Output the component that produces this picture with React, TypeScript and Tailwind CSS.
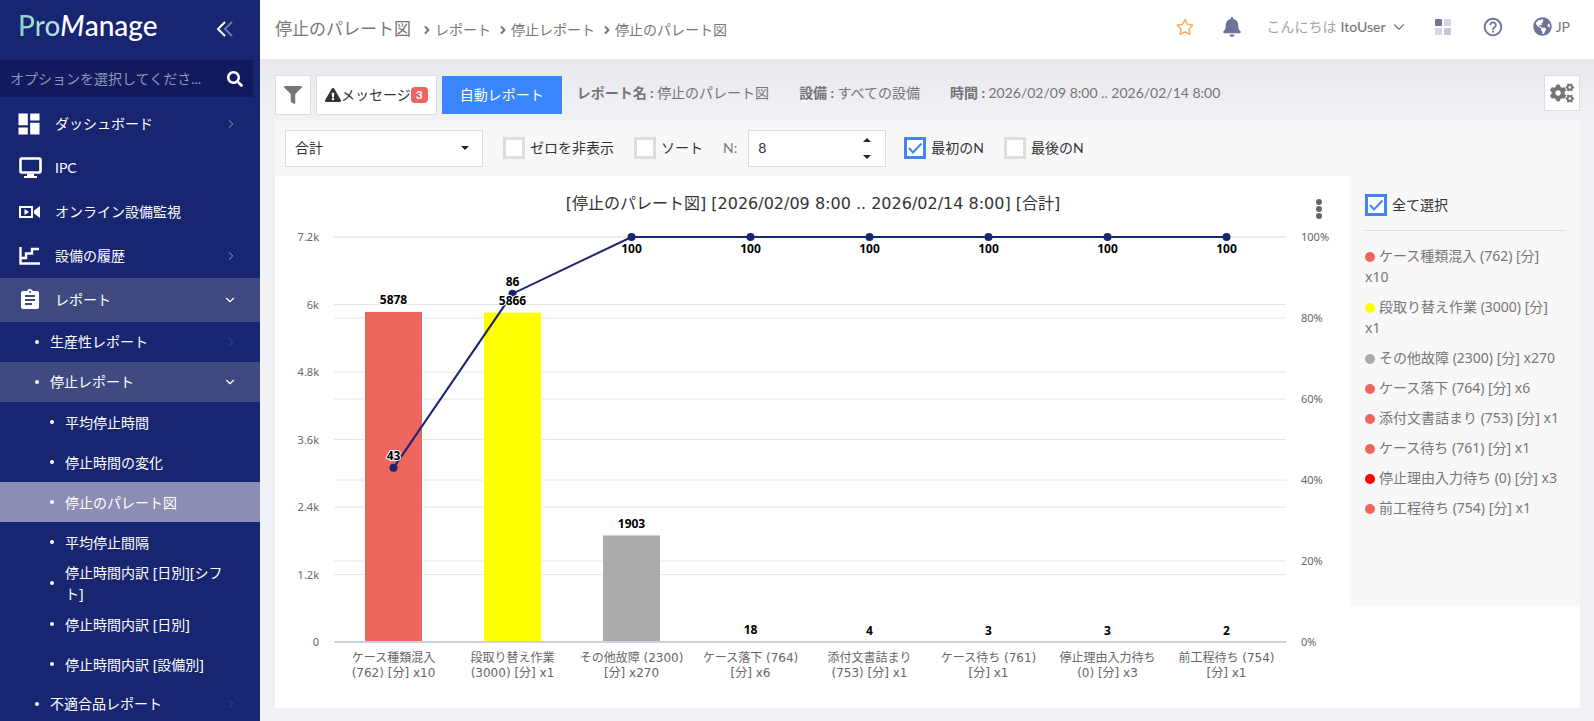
import { useState } from "react";
import { MdDashboard, MdAssignment, MdHelpOutline } from "react-icons/md";
import {
  FaBell,
  FaCogs,
  FaExclamationTriangle,
  FaFilter,
  FaGlobeAmericas,
  FaRegStar,
  FaSearch,
} from "react-icons/fa";
import { ChevronDown, ChevronRight } from "lucide-react";

const PARETO = [
  { label: ["ケース種類混入", "(762) [分] x10"], value: 5878, percent: 43, color: "#ec655f" },
  { label: ["段取り替え作業", "(3000) [分] x1"], value: 5866, percent: 86, color: "#ffff00" },
  { label: ["その他故障 (2300)", "[分] x270"], value: 1903, percent: 100, color: "#ababab" },
  { label: ["ケース落下 (764)", "[分] x6"], value: 18, percent: 100, color: "#ec655f" },
  { label: ["添付文書詰まり", "(753) [分] x1"], value: 4, percent: 100, color: "#ec655f" },
  { label: ["ケース待ち (761)", "[分] x1"], value: 3, percent: 100, color: "#ec655f" },
  { label: ["停止理由入力待ち", "(0) [分] x3"], value: 3, percent: 100, color: "#ff0000" },
  { label: ["前工程待ち (754)", "[分] x1"], value: 2, percent: 100, color: "#ec655f" },
];

const LEGEND = [
  { name: "ケース種類混入 (762) [分]\nx10", color: "#ec655f" },
  { name: "段取り替え作業 (3000) [分]\nx1", color: "#ffff00" },
  { name: "その他故障 (2300) [分] x270", color: "#ababab" },
  { name: "ケース落下 (764) [分] x6", color: "#ec655f" },
  { name: "添付文書詰まり (753) [分] x1", color: "#ec655f" },
  { name: "ケース待ち (761) [分] x1", color: "#ec655f" },
  { name: "停止理由入力待ち (0) [分] x3", color: "#ff0000" },
  { name: "前工程待ち (754) [分] x1", color: "#ec655f" },
];

const REPORTS = [
  "平均停止時間",
  "停止時間の変化",
  "停止のパレート図",
  "平均停止間隔",
  "停止時間内訳 [日別][シフト]",
  "停止時間内訳 [日別]",
  "停止時間内訳 [設備別]",
];

function MonitorIcon() {
  return (
    <svg viewBox="0 0 24 22" className="w-6 h-[22px]" fill="none" stroke="currentColor">
      <rect x="1.5" y="1.5" width="20" height="14" rx="1" strokeWidth="2.6" />
      <path d="M8 17h7v2h3v2H5v-2h3z" fill="currentColor" stroke="none" />
    </svg>
  );
}

function VideoIcon() {
  return (
    <svg viewBox="0 0 22 14" className="w-[22px] h-3.5" fill="none" stroke="currentColor">
      <rect x="1" y="2" width="12" height="10" strokeWidth="2" />
      <path d="M5.5 4v6l4.500-3z" fill="currentColor" stroke="none" />
      <path d="M21 1v12l-6-4.500v-3z" fill="currentColor" stroke="none" />
    </svg>
  );
}

function HistoryIcon() {
  return (
    <svg viewBox="0 0 22 18" className="w-[22px] h-[18px]" fill="none" stroke="currentColor" strokeWidth="2.4">
      <path d="M1.500 0v16.500H21" />
      <path d="M2 11h5V6.500h6V2h7" />
    </svg>
  );
}

function Chevron({ open, faint }: { open?: boolean; faint?: boolean }) {
  if (open) return <ChevronDown className="w-3.5 h-3.5 mr-[23px] text-white" />;
  return (
    <ChevronRight
      strokeWidth={1.5}
      className={faint ? "w-3.5 h-3.5 mr-[22px] text-white/20" : "w-3.5 h-3.5 mr-[22px] text-white/60"}
    />
  );
}

function MenuItem({ icon, text, arrow, open }: { icon: React.ReactNode; text: string; arrow?: boolean; open?: boolean }) {
  return (
    <a href="#" className={`flex items-center h-11 pl-[19px] ${open ? "bg-[#3f4b80]" : ""}`}>
      <span className="w-9 flex items-center">{icon}</span>
      <span className="flex-1">{text}</span>
      {arrow && <Chevron open={open} />}
    </a>
  );
}

function SubItem({ text, open }: { text: string; open?: boolean }) {
  return (
    <a href="#" className={`flex items-center h-10 shrink-0 pl-[35px] ${open ? "bg-[#3f4b80]" : ""}`}>
      <span className="w-1 h-1 rounded-full bg-white mr-[11px]" />
      <span className="flex-1">{text}</span>
      <Chevron open={open} faint />
    </a>
  );
}

function Sidebar() {
  return (
    <aside className="w-[260px] h-screen shrink-0 flex flex-col overflow-hidden bg-[#182570] text-white text-sm">
      <div className="flex items-center justify-between h-[60px] shrink-0 pl-[18px] pr-[26px] pb-2.5">
        <span className="text-[28px] leading-8 font-medium">
          <span className="bg-linear-to-r from-[#86d3c8] to-[#b9e4e6] bg-clip-text text-transparent">Pro</span>
          <i>M</i>anage
        </span>
        <button aria-label="メニューを閉じる" className="mt-2">
          <svg viewBox="0 0 18 16" className="w-[18px] h-4" fill="none" strokeWidth="2">
            <path d="M9 1 2 8l7 7" stroke="#ffffff" />
            <path d="m16 1-7 7 7 7" stroke="#7078ac" />
          </svg>
        </button>
      </div>
      <label className="flex items-center h-[37px] shrink-0 mr-[7px] pl-2.5 pr-2.5 bg-[#121a5e]">
        <input
          type="text"
          placeholder="オプションを選択してくださ..."
          className="flex-1 min-w-0 bg-transparent outline-none placeholder:text-[#9095b3]"
        />
        <FaSearch className="w-4 h-4" />
      </label>
      <nav className="flex flex-col pt-[5px]">
        <MenuItem icon={<MdDashboard className="w-7 h-7 -ml-1" />} text="ダッシュボード" arrow />
        <MenuItem icon={<MonitorIcon />} text="IPC" />
        <MenuItem icon={<VideoIcon />} text="オンライン設備監視" />
        <MenuItem icon={<HistoryIcon />} text="設備の履歴" arrow />
        <MenuItem icon={<MdAssignment className="w-6 h-6 -ml-px" />} text="レポート" arrow open />
        <SubItem text="生産性レポート" />
        <SubItem text="停止レポート" open />
        {REPORTS.map((name) => (
          <a
            key={name}
            href="#"
            className={`flex items-center min-h-10 shrink-0 pl-[50px] pr-7 ${name === "停止のパレート図" ? "bg-[#8c8db4]" : ""}`}
          >
            <span className="w-1 h-1 shrink-0 rounded-full bg-white mr-[11px]" />
            <span className="leading-[21px] font-['Noto_Sans','Noto_Sans_CJK_JP',sans-serif]">{name}</span>
          </a>
        ))}
        <SubItem text="不適合品レポート" />
      </nav>
    </aside>
  );
}

function Crumb({ text }: { text: string }) {
  return (
    <a href="#" className="flex items-center gap-0.5">
      <ChevronRight className="w-3 h-3" strokeWidth={4} />
      {text}
    </a>
  );
}

function Header() {
  return (
    <header className="flex items-center h-[59px] px-[15px] bg-white text-sm text-[#777777]">
      <h1 className="text-[17px] mr-2.5">停止のパレート図</h1>
      <nav className="flex items-center gap-1.5">
        <Crumb text="レポート" />
        <Crumb text="停止レポート" />
        <Crumb text="停止のパレート図" />
      </nav>
      <div className="ml-auto flex items-center pr-[9px] pb-1.5">
        <button aria-label="お気に入り" className="mr-[29px]">
          <FaRegStar className="w-[18px] h-[18px] text-[#f5b252]" />
        </button>
        <button aria-label="通知" className="mr-[26px]">
          <FaBell className="w-[18px] h-5 text-[#6f7299]" />
        </button>
        <button className="flex items-center mr-[27px]">
          <span className="text-[#a5a5a5] mr-1">こんにちは</span>
          <span className="font-medium">ItoUser</span>
          <ChevronDown className="w-[18px] h-[18px] ml-1" strokeWidth={1.5} />
        </button>
        <button aria-label="アプリ" className="grid grid-cols-2 gap-0.5 mr-[31px]">
          <span className="w-[7px] h-[7px] rounded-[1px] bg-[#6f7299]" />
          <span className="w-[7px] h-[7px] rounded-[1px] bg-[#d5d5e4]" />
          <span className="w-[7px] h-[7px] rounded-[1px] bg-[#d5d5e4]" />
          <span className="w-[7px] h-[7px] rounded-[1px] bg-[#c5c6d8]" />
        </button>
        <button aria-label="ヘルプ" className="mr-[29px]">
          <MdHelpOutline className="w-[22px] h-[22px] text-[#6f7299]" />
        </button>
        <button className="flex items-center gap-1">
          <FaGlobeAmericas className="w-[19px] h-[19px] text-[#6f7299]" />
          JP
        </button>
      </div>
    </header>
  );
}

function CheckBox({ label, initial = false }: { label: string; initial?: boolean }) {
  const [checked, setChecked] = useState(initial);
  return (
    <label className="flex items-center gap-[5px] text-[#333333]">
      <span className="relative flex">
        <input
          type="checkbox"
          checked={checked}
          onChange={(e) => setChecked(e.target.checked)}
          className="appearance-none w-[22px] h-[22px] border-3 border-[#dddddd] bg-white checked:border-[#4285f4]"
        />
        {checked && (
          <svg viewBox="0 0 22 22" className="absolute inset-0 pointer-events-none" fill="none" stroke="#4285f4" strokeWidth="2">
            <path d="m5 11 4 4.500 8.500-9" />
          </svg>
        )}
      </span>
      {label}
    </label>
  );
}

function ActionBar() {
  return (
    <div className="flex items-start h-[61px] pt-4 text-sm text-[#757575]">
      <button aria-label="フィルター" className="flex items-center justify-center w-9 h-10 mr-[5px] bg-white border border-[#dddee3]">
        <FaFilter className="w-[18px] h-[18px]" />
      </button>
      <button className="flex items-center h-10 mr-[5px] px-2 bg-white border border-[#dddee3] text-[#333333]">
        <FaExclamationTriangle className="w-4 h-4" />
        メッセージ
        <span className="px-[5px] h-4 rounded-sm bg-[#ec655f] text-white text-xs leading-4 font-bold">3</span>
      </button>
      <button className="h-[38px] mt-px w-[120px] bg-[#3a86ff] text-white">自動レポート</button>
      <div className="flex gap-[30px] ml-[15px] h-9 items-center">
        <span><b>レポート名 : </b>停止のパレート図</span>
        <span><b>設備 : </b>すべての設備</span>
        <span><b>時間 : </b>2026/02/09 8:00 .. 2026/02/14 8:00</span>
      </div>
      <button aria-label="設定" className="flex items-center justify-center w-9 h-9 ml-auto bg-white border border-[#dddee3]">
        <FaCogs className="w-6 h-5" />
      </button>
    </div>
  );
}

function FilterBar() {
  const [count, setCount] = useState(8);
  return (
    <div className="flex items-center h-14 px-2.5 bg-[#f8f8f9] text-sm text-[#333333]">
      <div className="relative w-[198px] mr-5">
        <select aria-label="集計" className="appearance-none w-full h-[37px] pl-[9px] bg-white border border-[#dddddd]">
          <option>合計</option>
        </select>
        <span className="absolute right-3.5 top-4 border-x-4 border-t-4 border-x-transparent border-t-[#222222] pointer-events-none" />
      </div>
      <CheckBox label="ゼロを非表示" />
      <div className="w-5" />
      <CheckBox label="ソート" />
      <label htmlFor="count" className="ml-5 mr-[11px] text-[#777777]">N:</label>
      <div className="flex w-[138px] h-[37px] mr-[18px] pr-2.5 bg-white border border-[#dddddd]">
        <input
          id="count"
          type="text"
          inputMode="numeric"
          value={count}
          onChange={(e) => setCount(Number(e.target.value) || 0)}
          className="flex-1 min-w-0 pl-[9px] outline-none"
        />
        <div className="flex flex-col justify-center gap-[5px]">
          <button aria-label="増やす" className="p-1" onClick={() => setCount(count + 1)}>
            <span className="block border-x-4 border-b-4 border-x-transparent border-b-[#222222]" />
          </button>
          <button aria-label="減らす" className="p-1" onClick={() => setCount(count - 1)}>
            <span className="block border-x-4 border-t-4 border-x-transparent border-t-[#222222]" />
          </button>
        </div>
      </div>
      <CheckBox label="最初のN" initial />
      <div className="w-5" />
      <CheckBox label="最後のN" />
    </div>
  );
}

// plot area inside the 1075 x 532 chart
const LEFT = 59;
const RIGHT = 1011;
const TOP = 61;
const BOTTOM = 466;
const STEP = (RIGHT - LEFT) / PARETO.length;

const centerX = (i: number) => LEFT + STEP * (i + 0.5);
const valueY = (v: number) => BOTTOM - (v / 7200) * (BOTTOM - TOP);
const percentY = (p: number) => BOTTOM - (p / 100) * (BOTTOM - TOP);

function ParetoChart() {
  const leftTicks = ["0", "1.2k", "2.4k", "3.6k", "4.8k", "6k", "7.2k"];
  const rightTicks = [0, 20, 40, 60, 80, 100];

  return (
    <svg viewBox="0 0 1075 532" className="w-full font-['Noto_Sans','Noto_Sans_CJK_JP',sans-serif]">
      <text
        x="538"
        y="33"
        textAnchor="middle"
        fontSize="16"
        fill="#333333"
        className="font-['DejaVu_Sans','Noto_Sans_CJK_JP',sans-serif]"
      >
        [停止のパレート図] [2026/02/09 8:00 .. 2026/02/14 8:00] [合計]
      </text>
      {[26, 33, 40].map((y) => (
        <circle key={y} cx="1044" cy={y} r="3" fill="#666666" />
      ))}

      {leftTicks.map((tick, i) => (
        <g key={tick}>
          <line x1={LEFT} x2={RIGHT} y1={valueY(i * 1200)} y2={valueY(i * 1200)} stroke="#e6e6e6" />
          <text x="44" y={valueY(i * 1200) + 4} textAnchor="end" fontSize="11" fill="#666666">{tick}</text>
        </g>
      ))}
      {rightTicks.map((tick) => (
        <g key={tick}>
          <line x1={LEFT} x2={RIGHT} y1={percentY(tick)} y2={percentY(tick)} stroke="#e6e6e6" />
          <text x="1026" y={percentY(tick) + 4} fontSize="11" fill="#666666">{tick}%</text>
        </g>
      ))}

      {PARETO.map((item, i) => (
        <rect
          key={item.label[0]}
          x={centerX(i) - 29}
          y={valueY(item.value)}
          width="58"
          height={BOTTOM - valueY(item.value)}
          fill={item.color}
          stroke="#ffffff"
        />
      ))}
      <line x1={LEFT} x2={RIGHT} y1={BOTTOM} y2={BOTTOM} stroke="#ccd0e0" strokeWidth="2" />

      <polyline
        points={PARETO.map((item, i) => `${centerX(i)},${percentY(item.percent)}`).join(" ")}
        fill="none"
        stroke="#1a256f"
        strokeWidth="2"
      />
      {PARETO.map((item, i) => (
        <circle key={item.label[0]} cx={centerX(i)} cy={percentY(item.percent)} r="4" fill="#1a256f" />
      ))}

      {PARETO.map((item, i) => (
        <g key={item.label[0]} textAnchor="middle">
          <g fontSize="12" fontWeight="bold" stroke="#ffffff" strokeWidth="2" paintOrder="stroke" strokeLinejoin="round">
            <text x={centerX(i)} y={valueY(item.value) - 7}>{item.value}</text>
            <text x={centerX(i)} y={percentY(item.percent) + (item.percent === 100 ? 16 : -8)}>{item.percent}</text>
          </g>
          <g fontSize="12" fill="#666666" className="font-['DejaVu_Sans','Noto_Sans_CJK_JP',sans-serif]">
            <text x={centerX(i)} y="486">{item.label[0]}</text>
            <text x={centerX(i)} y="501">{item.label[1]}</text>
          </g>
        </g>
      ))}
    </svg>
  );
}

function Legend() {
  return (
    <div className="w-[230px] shrink-0 self-start h-[430px] pt-[18px] px-[15px] bg-[#f8f8f9] text-sm text-[#777777]">
      <div className="pb-3.5 mb-3.5 border-b border-[#dddddd]">
        <CheckBox label="全て選択" initial />
      </div>
      <ul className="flex flex-col gap-[9px] leading-[21px] whitespace-pre font-['Noto_Sans','Noto_Sans_CJK_JP',sans-serif]">
        {LEGEND.map((item) => (
          <li key={item.name}>
            <span className="inline-block w-2.5 h-2.5 mr-1 -mb-px rounded-full" style={{ backgroundColor: item.color }} />
            {item.name}
          </li>
        ))}
      </ul>
    </div>
  );
}

export default function App() {
  return (
    <div className="flex min-h-screen bg-[#f1f2f6] font-['Lato','Noto_Sans_CJK_JP',sans-serif]">
      <Sidebar />
      <div className="flex-1 min-w-0">
        <Header />
        <main className="px-[14px] pl-[15px] pb-3 bg-linear-to-b from-[#e7e7ec] to-[#f1f2f6] to-[60px]">
          <ActionBar />
          <FilterBar />
          <div className="flex bg-white">
            <div className="flex-1 min-w-0">
              <ParetoChart />
            </div>
            <Legend />
          </div>
        </main>
      </div>
    </div>
  );
}
